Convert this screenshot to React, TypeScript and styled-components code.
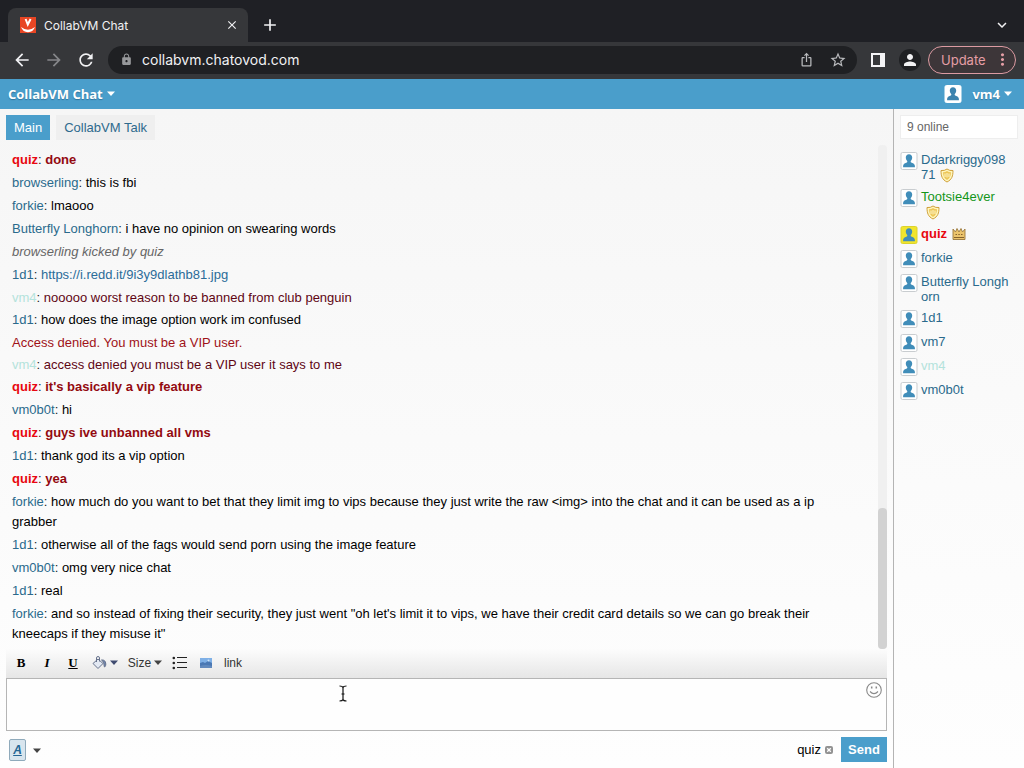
import React from "react";
import styled, { createGlobalStyle } from "styled-components";
import {
  MdAdd,
  MdArrowBack,
  MdArrowForward,
  MdClose,
  MdExpandMore,
  MdIosShare,
  MdLock,
  MdMoreVert,
  MdPerson,
  MdRefresh,
  MdStarBorder,
} from "react-icons/md";

const blue = "#4a9ecb";
const linkBlue = "#2a6a8c";
const sans = '"Liberation Sans", Arial, sans-serif';
const chromeFont = 'Inter, Roboto, sans-serif';

const GlobalStyle = createGlobalStyle`
  * { box-sizing: border-box; }
  body { margin: 0; font-family: ${sans}; font-size: 13px; color: #000; }
  button, input, textarea { font: inherit; color: inherit; margin: 0; }
  button { border: 0; padding: 0; background: none; cursor: pointer; }
  svg { display: block; flex: none; }
  a { text-decoration: none; }
`;

const Window = styled.div`
  display: flex;
  flex-direction: column;
  height: 100vh;
  min-height: 480px;
  background: #fbfbfb;
`;

/* Browser chrome */

const TabStrip = styled.div`
  display: flex;
  align-items: flex-end;
  height: 42px;
  padding: 0 12px 0 8px;
  background: #1f2025;
  color: #f1f1f3;
  font-family: ${chromeFont};
`;

const BrowserTab = styled.div`
  display: flex;
  align-items: center;
  gap: 8px;
  width: 240px;
  height: 34px;
  padding: 0 8px 0 12px;
  border-radius: 8px 8px 0 0;
  background: #36373a;
  font-size: 12px;
`;

const TabTitle = styled.span`
  flex: 1;
`;

const IconButton = styled.button<{ $dim?: boolean; $size?: number }>`
  display: flex;
  align-items: center;
  justify-content: center;
  width: ${(p) => p.$size ?? 20}px;
  height: ${(p) => p.$size ?? 20}px;
  color: ${(p) => (p.$dim ? "#86878a" : "inherit")};
`;

const StripActions = styled.div`
  display: flex;
  flex: 1;
  align-items: center;
  justify-content: space-between;
  height: 34px;
  padding-left: 12px;
`;

const AddressRow = styled.div`
  display: flex;
  align-items: center;
  gap: 12px;
  height: 37px;
  padding: 0 8px 2px 12px;
  background: #36373a;
  color: #f1f1f3;
  font-family: ${chromeFont};
`;

const AddressGroup = styled.div`
  display: flex;
  flex: 1;
  align-items: center;
  gap: 7px;
`;

const AddressBox = styled.div`
  display: flex;
  flex: 1;
  align-items: center;
  height: 28px;
  padding: 0 9px 0 12px;
  border-radius: 14px;
  background: #1f2023;
  color: #b9babd;
`;

const AddressInput = styled.input`
  flex: 1;
  min-width: 0;
  padding: 0 9px;
  border: 0;
  outline: 0;
  background: none;
  color: #f1f1f3;
  font-size: 14px;
`;

const AddressActions = styled.div`
  display: flex;
  gap: 12px;
`;

const Profile = styled.button`
  display: flex;
  align-items: center;
  justify-content: center;
  width: 22px;
  height: 22px;
  border-radius: 50%;
  background: #1f2023;
`;

const UpdateButton = styled.button`
  display: flex;
  align-items: center;
  justify-content: space-between;
  width: 88px;
  height: 28px;
  padding: 0 3px 0 12px;
  border: 1px solid #dc9ba2;
  border-radius: 14px;
  background: #3d3639;
  color: #e59ea6;
  font-size: 13px;
`;

/* Chat header */

const Header = styled.header`
  display: flex;
  align-items: center;
  justify-content: space-between;
  height: 30px;
  padding: 0 12px 1px 8px;
  background: ${blue};
  color: #fff;
`;

const HeaderButton = styled.button`
  display: flex;
  align-items: center;
  gap: 4px;
  font-family: "Open Sans", sans-serif;
  font-size: 13px;
  font-weight: 700;
  text-shadow: 0 1px 1px rgba(0, 40, 70, 0.35);
`;

const Account = styled.div`
  display: flex;
  align-items: center;
  gap: 10px;
`;

const Body = styled.div`
  display: flex;
  flex: 1;
  min-height: 0;
`;

const Chat = styled.main`
  display: flex;
  flex: 1;
  flex-direction: column;
  min-width: 0;
  padding: 6px;
  background: linear-gradient(#f6f6f6, #fefefe);
`;

const Rooms = styled.nav`
  display: flex;
  gap: 6px;
`;

const Room = styled.button<{ $active?: boolean }>`
  height: 25px;
  padding: 0 8px;
  background: ${(p) => (p.$active ? blue : "#efefef")};
  color: ${(p) => (p.$active ? "#fff" : "#2e6a8d")};
`;

const LogArea = styled.div`
  display: flex;
  flex: 1;
  min-height: 0;
  padding-top: 5px;
`;

const Log = styled.div`
  display: flex;
  flex: 1;
  flex-direction: column;
  justify-content: flex-end;
  overflow: hidden;
  padding: 0 16px 5px 6px;
`;

const Message = styled.p<{ $tone?: string; $strong?: boolean; $action?: boolean; $compact?: boolean }>`
  flex: none;
  margin: 3px 0 0;
  line-height: ${(p) => (p.$compact ? 19 : 20)}px;
  color: ${(p) => p.$tone ?? "#000"};
  font-weight: ${(p) => (p.$strong ? 700 : 400)};
  font-style: ${(p) => (p.$action ? "italic" : "normal")};
`;

const Author = styled.span<{ $color?: string }>`
  color: ${(p) => p.$color ?? linkBlue};
`;

const Colon = styled.span`
  color: #222;
  font-weight: 400;
`;

const ChatLink = styled.a`
  color: #2b6c98;
`;

const ScrollTrack = styled.div`
  display: flex;
  flex-direction: column;
  justify-content: flex-end;
  width: 9px;
  border-radius: 4px;
  background: #f0f0f0;
`;

const ScrollThumb = styled.div`
  height: 28%;
  border-radius: 4px;
  background: #d2d2d2;
`;

const Toolbar = styled.div`
  display: flex;
  align-items: center;
  height: 29px;
  padding: 0 0 2px 2px;
  background: linear-gradient(#fcfcfc, #e6e6e6);
  color: #333;
`;

const Tool = styled.button<{ $width?: number }>`
  display: flex;
  align-items: center;
  justify-content: center;
  gap: 3px;
  width: ${(p) => p.$width ?? 26}px;
  height: 24px;
  font-size: 12px;
`;

const Letter = styled.span<{ $kind: "bold" | "italic" | "underline" }>`
  color: #000;
  font: 700 13px "Liberation Serif", serif;
  font-style: ${(p) => (p.$kind === "italic" ? "italic" : "normal")};
  text-decoration: ${(p) => (p.$kind === "underline" ? "underline" : "none")};
`;

const Compose = styled.div`
  display: flex;
  align-items: flex-start;
  height: 53px;
  padding: 3px 4px;
  border: 1px solid #b5b5b5;
  background: #fefefe;
`;

const Editor = styled.textarea`
  flex: 1;
  height: 45px;
  padding: 0;
  border: 0;
  outline: 0;
  resize: none;
  background: none;
`;

const PointerLayer = styled.div`
  position: absolute;
  left: 338px;
  top: 685px;
  pointer-events: none;
`;

const SendRow = styled.div`
  display: flex;
  align-items: center;
  justify-content: space-between;
  padding: 6px 0 0 3px;
`;

const SendGroup = styled.div`
  display: flex;
  align-items: center;
  gap: 4px;
`;

const StyleGroup = styled.div`
  display: flex;
  align-items: flex-end;
  gap: 1px;
`;

const StyleButton = styled.button`
  width: 17px;
  height: 22px;
  border: 1px solid #8faabb;
  border-radius: 2px;
  background: #d8e5ee;
  color: #246694;
  font-size: 12px;
  font-weight: 700;
  font-style: italic;
  text-decoration: underline;
`;

const SendButton = styled.button`
  width: 46px;
  height: 25px;
  margin-left: 4px;
  background: ${blue};
  color: #fff;
  font-weight: 700;
`;

/* Sidebar */

const Sidebar = styled.aside`
  width: 131px;
  padding: 6px;
  border-left: 1px solid #b4b4b4;
  background: linear-gradient(#f7f7f7, #fefefe);
`;

const Search = styled.input`
  display: block;
  width: 100%;
  height: 24px;
  padding: 0 6px;
  border: 1px solid #eeeeee;
  background: #fff;
  font-size: 12px;
  outline: 0;
  &::placeholder { color: #666; opacity: 1; }
`;

const Users = styled.ul`
  display: flex;
  flex-direction: column;
  gap: 6px;
  margin: 13px 0 0;
  padding: 0;
  list-style: none;
`;

const User = styled.li<{ $color?: string; $strong?: boolean }>`
  display: flex;
  gap: 3px;
  color: ${(p) => p.$color ?? linkBlue};
  font-weight: ${(p) => (p.$strong ? 700 : 400)};
  line-height: 15px;
`;

const UserName = styled.span`
  width: 89px;
  word-break: break-all;
`;

const Badge = styled.span`
  display: inline-block;
  height: 16px;
  padding-top: 1px;
  margin-left: 5px;
  vertical-align: top;
`;

const Caret = ({ color = "#444", size = 8 }: { color?: string; size?: number }) => (
  <svg width={size} height={size / 2 + 1} viewBox="0 0 8 5" fill={color}>
    <path d="M0 0.5h8L4 5z" />
  </svg>
);

const Avatar = ({ bg = "#fff", fg = "#408db9", edge = "#c9cdd0" }) => (
  <svg width="18" height="18" viewBox="0 0 18 18">
    <rect x="1" y="0.5" width="16" height="17" rx="1.500" fill={bg} stroke={edge} />
    <path
      d="M9 2.200c2 0 3.200 1.400 3.200 3.300 0 1.600-.6 2.600-1.400 3.400-.3.500-.1 1.200.4 1.500 1.400.7 3.500 1 3.700 3.400v1.500H3.100v-1.500c.2-2.400 2.300-2.700 3.700-3.400.5-.3.7-1 .4-1.500-.8-.8-1.400-1.800-1.400-3.400 0-1.900 1.200-3.300 3.200-3.300z"
      fill={fg}
    />
  </svg>
);

const Shield = () => (
  <svg width="14" height="15" viewBox="0 0 14 15">
    <path
      d="M1 2.500Q4.500 3 7 1q2.500 2 6 1.500c0 5.500-1 9-6 11.500C2 11.500 1 8 1 2.500z"
      fill="#fff6bd"
      stroke="#cfa03a"
    />
    <path d="M3 4.300q2.300 0 4-1.200 1.700 1.200 4 1.200c-.2 3.400-.9 5.900-4 7.800-3.100-1.900-3.800-4.400-4-7.800z" fill="#edc657" />
    <path d="M5 5.500v3.500M7 5v4.500M9 5.500v3.500" stroke="#fff8cf" />
  </svg>
);

const Crown = () => (
  <svg width="14" height="14" viewBox="0 0 14 14">
    <path
      d="M1 2l2.500 3L5 1.500 7 5l2-3.500L10.500 5 13 2v10.500H1z"
      fill="#ecc46c"
      stroke="#9b783c"
      strokeWidth="0.900"
    />
    <path d="M2 10.500h10M3.500 7.500h1.500M6.300 7.500h1.500M9 7.500h1.500" stroke="#85622c" />
  </svg>
);

const Favicon = () => (
  <svg width="16" height="16" viewBox="0 0 16 16">
    <rect width="16" height="16" fill="#e84624" />
    <path d="M5.600 2l2.200 5.500L10.600 2" fill="none" stroke="#fff" strokeWidth="2" />
    <path d="M1 10q7 5.500 14 0-2 5.200-7 5.200T1 10z" fill="#fff" />
  </svg>
);

const Bucket = () => (
  <svg width="15" height="14" viewBox="0 0 15 14" fill="none" stroke="#66728c">
    <path d="M1 7.500L6 3l5 4.500-5 5z" fill="#e3e9f3" />
    <path d="M4.500 6V2q0-1.500 1.500-1.500T7.500 2v3.500" />
    <path d="M9.500 4q4-.5 4.300 4c0 2-.8 3-1.300 3-1-2 .2-4.500-3-7z" fill="#7287b0" />
  </svg>
);

const ListIcon = () => (
  <svg width="16" height="14" viewBox="0 0 16 14" fill="#222">
    <path d="M5 1h10v1H5zM5 6h10v1H5zM5 11h10v1H5z" />
    <circle cx="1.800" cy="2" r="1.300" />
    <circle cx="1.800" cy="7" r="1.300" />
    <circle cx="1.800" cy="12" r="1.300" />
  </svg>
);

const PictureIcon = () => (
  <svg width="12" height="10" viewBox="0 0 12 10">
    <rect width="12" height="10" fill="#7fb0e6" />
    <path d="M0 5l3-1 2 1 3-2 4 2v5H0z" fill="#4a78b4" />
    <circle cx="8.500" cy="2.500" r="1" fill="#cfe3f8" />
    <path d="M0 8q5-2 12 0v2H0z" fill="#6189bd" />
  </svg>
);

const Smile = () => (
  <svg width="16" height="16" viewBox="0 0 16 16" fill="none" stroke="#898989" strokeWidth="1.100">
    <circle cx="8" cy="8" r="7.300" />
    <path d="M4 9.500q4 4.200 8 0" />
    <path d="M5.700 4.500v2M10.300 4.500v2" strokeWidth="1.500" />
  </svg>
);

const SidePanel = () => (
  <svg width="14" height="14" viewBox="0 0 14 14">
    <path d="M0 0h14v14H0zM2 2v10h7V2z" fill="#f4f4f6" fillRule="evenodd" />
  </svg>
);

const ClearIcon = () => (
  <svg width="8" height="8" viewBox="0 0 8 8">
    <rect width="8" height="8" rx="2" fill="#929292" />
    <path d="M2.200 2.200l3.600 3.600M5.800 2.200L2.200 5.800" stroke="#fff" strokeWidth="1.300" />
  </svg>
);

const TextPointer = () => (
  <svg width="10" height="17" viewBox="0 0 10 17" fill="none" stroke="#111" strokeWidth="1.200">
    <path d="M1.500 1Q4.500 1 5 2.500 5.500 1 8.500 1M5 2.500v12M1.500 16q3 0 3.500-1.500.5 1.500 3.500 1.500M3.500 9h3" />
  </svg>
);

const red = "#e80710";
const darkRed = "#930a10";
const mint = "#b4e3dc";
const maroon = "#5f0614";

type Entry = {
  who?: string;
  text: string;
  color?: string;
  tone?: string;
  strong?: boolean;
  action?: boolean;
  compact?: boolean;
  link?: boolean;
};

const entries: Entry[] = [
  { who: "quiz", text: "done", color: red, tone: darkRed, strong: true },
  { who: "browserling", text: "this is fbi" },
  { who: "forkie", text: "lmaooo" },
  { who: "Butterfly Longhorn", text: "i have no opinion on swearing words" },
  { text: "browserling kicked by quiz", tone: "#666", action: true },
  { who: "1d1", text: "https://i.redd.it/9i3y9dlathb81.jpg", link: true },
  { who: "vm4", text: "nooooo worst reason to be banned from club penguin", color: mint, tone: maroon, compact: true },
  { who: "1d1", text: "how does the image option work im confused" },
  { text: "Access denied. You must be a VIP user.", tone: "#a01218", compact: true },
  { who: "vm4", text: "access denied you must be a VIP user it says to me", color: mint, tone: maroon, compact: true },
  { who: "quiz", text: "it's basically a vip feature", color: red, tone: darkRed, strong: true },
  { who: "vm0b0t", text: "hi" },
  { who: "quiz", text: "guys ive unbanned all vms", color: red, tone: darkRed, strong: true },
  { who: "1d1", text: "thank god its a vip option" },
  { who: "quiz", text: "yea", color: red, tone: darkRed, strong: true },
  {
    who: "forkie",
    text: "how much do you want to bet that they limit img to vips because they just write the raw <img> into the chat and it can be used as a ip grabber",
  },
  { who: "1d1", text: "otherwise all of the fags would send porn using the image feature" },
  { who: "vm0b0t", text: "omg very nice chat" },
  { who: "1d1", text: "real" },
  {
    who: "forkie",
    text: "and so instead of fixing their security, they just went \"oh let's limit it to vips, we have their credit card details so we can go break their kneecaps if they misuse it\"",
  },
];

type Person = { name: string; color?: string; strong?: boolean; badge?: "shield" | "crown" };

const people: Person[] = [
  { name: "Ddarkriggy09871", badge: "shield" },
  { name: "Tootsie4ever", color: "#14961a", badge: "shield" },
  { name: "quiz", color: red, strong: true, badge: "crown" },
  { name: "forkie" },
  { name: "Butterfly Longhorn" },
  { name: "1d1" },
  { name: "vm7" },
  { name: "vm4", color: mint },
  { name: "vm0b0t" },
];

export default function App() {
  return (
    <Window>
      <GlobalStyle />
      <TabStrip>
        <BrowserTab>
          <Favicon />
          <TabTitle>CollabVM Chat</TabTitle>
          <IconButton $size={16} aria-label="Close tab"><MdClose size={14} /></IconButton>
        </BrowserTab>
        <StripActions>
          <IconButton aria-label="New tab"><MdAdd size={20} /></IconButton>
          <IconButton aria-label="Search tabs"><MdExpandMore size={18} /></IconButton>
        </StripActions>
      </TabStrip>
      <AddressRow>
        <IconButton aria-label="Back"><MdArrowBack size={20} /></IconButton>
        <IconButton $dim aria-label="Forward"><MdArrowForward size={20} /></IconButton>
        <IconButton aria-label="Reload"><MdRefresh size={20} /></IconButton>
        <AddressGroup>
          <AddressBox>
            <MdLock size={13} color="#97989b" />
            <AddressInput aria-label="Address" defaultValue="collabvm.chatovod.com" />
            <AddressActions>
              <IconButton aria-label="Share"><MdIosShare size={15} /></IconButton>
              <IconButton aria-label="Bookmark"><MdStarBorder size={18} /></IconButton>
            </AddressActions>
          </AddressBox>
          <IconButton $size={28} aria-label="Side panel"><SidePanel /></IconButton>
          <Profile aria-label="Profile"><MdPerson size={18} /></Profile>
          <UpdateButton>Update<MdMoreVert size={19} /></UpdateButton>
        </AddressGroup>
      </AddressRow>
      <Header>
        <HeaderButton>CollabVM Chat<Caret color="#fff" size={8} /></HeaderButton>
        <Account>
          <Avatar bg="#fff" fg="#3c83ae" edge="#fff" />
          <HeaderButton>vm4<Caret color="#fff" size={8} /></HeaderButton>
        </Account>
      </Header>
      <Body>
        <Chat>
          <Rooms>
            <Room $active>Main</Room>
            <Room>CollabVM Talk</Room>
          </Rooms>
          <LogArea>
            <Log>
              {entries.map((m, i) => (
                <Message key={i} $tone={m.tone} $strong={m.strong} $action={m.action} $compact={m.compact}>
                  {m.who && (
                    <>
                      <Author $color={m.color}>{m.who}</Author>
                      <Colon>: </Colon>
                    </>
                  )}
                  {m.link ? <ChatLink href={m.text}>{m.text}</ChatLink> : m.text}
                </Message>
              ))}
            </Log>
            <ScrollTrack><ScrollThumb /></ScrollTrack>
          </LogArea>
          <Toolbar>
            <Tool aria-label="Bold"><Letter $kind="bold">B</Letter></Tool>
            <Tool aria-label="Italic"><Letter $kind="italic">I</Letter></Tool>
            <Tool aria-label="Underline"><Letter $kind="underline">U</Letter></Tool>
            <Tool $width={38} aria-label="Colour"><Bucket /><Caret color="#3f4b70" /></Tool>
            <Tool $width={42}>Size<Caret /></Tool>
            <Tool $width={28} aria-label="List"><ListIcon /></Tool>
            <Tool $width={24} aria-label="Image"><PictureIcon /></Tool>
            <Tool $width={30}>link</Tool>
          </Toolbar>
          <Compose>
            <Editor aria-label="Message" />
            <IconButton $size={16} aria-label="Smileys"><Smile /></IconButton>
          </Compose>
          <SendRow>
            <StyleGroup>
              <StyleButton aria-label="Text style">A</StyleButton>
              <IconButton aria-label="More styles"><Caret /></IconButton>
            </StyleGroup>
            <SendGroup>
              <span>quiz</span>
              <IconButton $size={8} aria-label="Clear recipient"><ClearIcon /></IconButton>
              <SendButton>Send</SendButton>
            </SendGroup>
          </SendRow>
        </Chat>
        <Sidebar>
          <Search aria-label="Search users" placeholder="9 online" />
          <Users>
            {people.map((p) => (
              <User key={p.name} $color={p.color} $strong={p.strong}>
                <Avatar bg={p.strong ? "#f1e52c" : "#fff"} edge={p.strong ? "#dcd32c" : "#c9cdd0"} />
                <UserName>
                  {p.name}
                  {p.badge && <Badge>{p.badge === "shield" ? <Shield /> : <Crown />}</Badge>}
                </UserName>
              </User>
            ))}
          </Users>
        </Sidebar>
      </Body>
      <PointerLayer><TextPointer /></PointerLayer>
    </Window>
  );
}
